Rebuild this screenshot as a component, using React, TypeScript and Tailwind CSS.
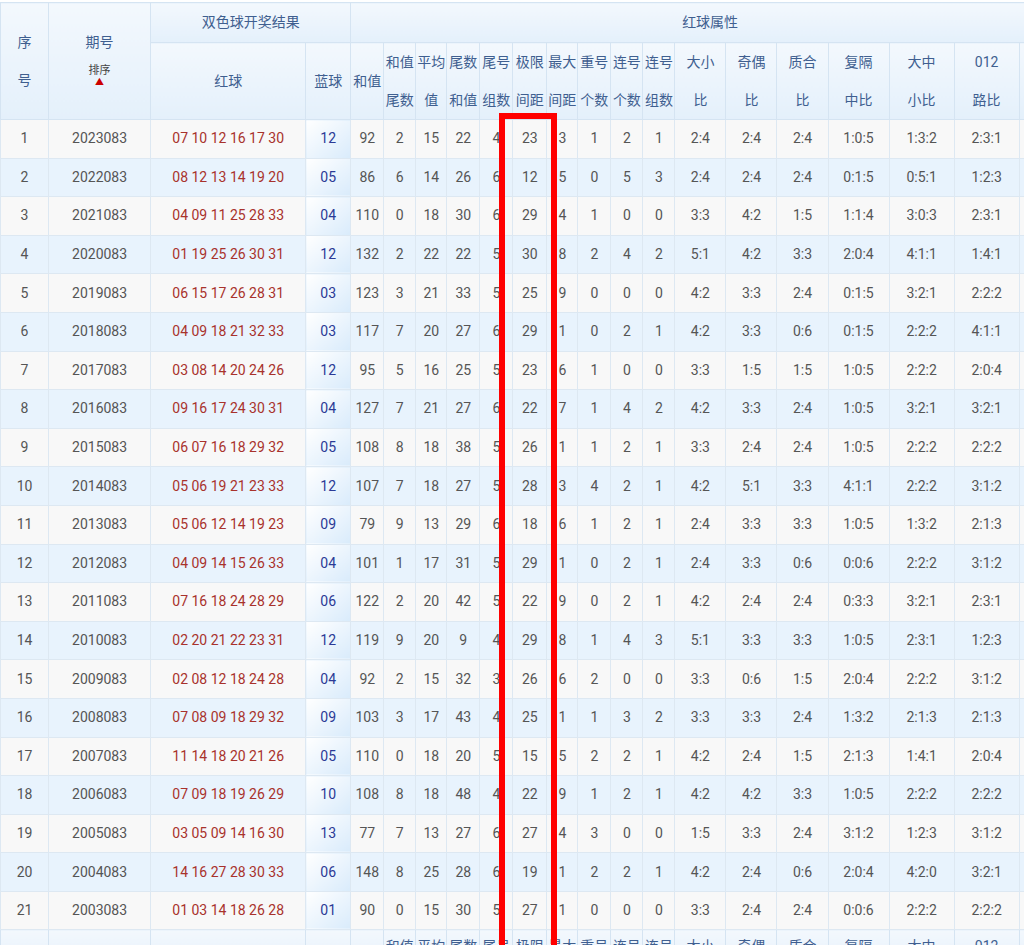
import React from "react";

const raw = `1 2023083 07 10 12 16 17 30|12|92 2 15 22 4 23 3 1 2 1 2:4 2:4 2:4 1:0:5 1:3:2 2:3:1
2 2022083 08 12 13 14 19 20|05|86 6 14 26 6 12 5 0 5 3 2:4 2:4 2:4 0:1:5 0:5:1 1:2:3
3 2021083 04 09 11 25 28 33|04|110 0 18 30 6 29 4 1 0 0 3:3 4:2 1:5 1:1:4 3:0:3 2:3:1
4 2020083 01 19 25 26 30 31|12|132 2 22 22 5 30 8 2 4 2 5:1 4:2 3:3 2:0:4 4:1:1 1:4:1
5 2019083 06 15 17 26 28 31|03|123 3 21 33 5 25 9 0 0 0 4:2 3:3 2:4 0:1:5 3:2:1 2:2:2
6 2018083 04 09 18 21 32 33|03|117 7 20 27 6 29 1 0 2 1 4:2 3:3 0:6 0:1:5 2:2:2 4:1:1
7 2017083 03 08 14 20 24 26|12|95 5 16 25 5 23 6 1 0 0 3:3 1:5 1:5 1:0:5 2:2:2 2:0:4
8 2016083 09 16 17 24 30 31|04|127 7 21 27 6 22 7 1 4 2 4:2 3:3 2:4 1:0:5 3:2:1 3:2:1
9 2015083 06 07 16 18 29 32|05|108 8 18 38 5 26 1 1 2 1 3:3 2:4 2:4 1:0:5 2:2:2 2:2:2
10 2014083 05 06 19 21 23 33|12|107 7 18 27 5 28 3 4 2 1 4:2 5:1 3:3 4:1:1 2:2:2 3:1:2
11 2013083 05 06 12 14 19 23|09|79 9 13 29 6 18 6 1 2 1 2:4 3:3 3:3 1:0:5 1:3:2 2:1:3
12 2012083 04 09 14 15 26 33|04|101 1 17 31 5 29 1 0 2 1 2:4 3:3 0:6 0:0:6 2:2:2 3:1:2
13 2011083 07 16 18 24 28 29|06|122 2 20 42 5 22 9 0 2 1 4:2 2:4 2:4 0:3:3 3:2:1 2:3:1
14 2010083 02 20 21 22 23 31|12|119 9 20 9 4 29 8 1 4 3 5:1 3:3 3:3 1:0:5 2:3:1 1:2:3
15 2009083 02 08 12 18 24 28|04|92 2 15 32 3 26 6 2 0 0 3:3 0:6 1:5 2:0:4 2:2:2 3:1:2
16 2008083 07 08 09 18 29 32|09|103 3 17 43 4 25 1 1 3 2 3:3 3:3 2:4 1:3:2 2:1:3 2:1:3
17 2007083 11 14 18 20 21 26|05|110 0 18 20 5 15 5 2 2 1 4:2 2:4 1:5 2:1:3 1:4:1 2:0:4
18 2006083 07 09 18 19 26 29|10|108 8 18 48 4 22 9 1 2 1 4:2 4:2 3:3 1:0:5 2:2:2 2:2:2
19 2005083 03 05 09 14 16 30|13|77 7 13 27 6 27 4 3 0 0 1:5 3:3 2:4 3:1:2 1:2:3 3:1:2
20 2004083 14 16 27 28 30 33|06|148 8 25 28 6 19 1 2 2 1 4:2 2:4 0:6 2:0:4 4:2:0 3:2:1
21 2003083 01 03 14 18 26 28|01|90 0 15 30 5 27 1 0 0 0 3:3 2:4 2:4 0:0:6 2:2:2 2:2:2`;

const rows = raw.split("\n").map((l) => {
  const [a, b, c] = l.split("|");
  const p = a.split(" ");
  return { n: p[0], q: p[1], red: p.slice(2).join(" "), blue: b, rest: c.split(" ") };
});

const widths = [48, 102, 155, 45, 33, 32, 31, 33, 33, 34, 31, 33, 32, 32, 51, 51, 51, 61, 65, 65, 50];
const attrs: [string, string][] = [
  ["和值", "尾数"], ["平均", "值"], ["尾数", "和值"], ["尾号", "组数"], ["极限", "间距"], ["最大", "间距"],
  ["重号", "个数"], ["连号", "个数"], ["连号", "组数"], ["大小", "比"], ["奇偶", "比"], ["质合", "比"],
  ["复隔", "中比"], ["大中", "小比"], ["012", "路比"], ["", ""],
];

const th = "border border-[#d5e4f2] bg-gradient-to-b from-[#f3f8fd] to-[#e4f0fb] text-[#3f5f90] font-normal text-[14px] p-0 text-center";

export default function App() {
  return (
    <div className="relative w-[1024px] h-[945px] overflow-hidden bg-white" style={{ fontFamily: "Roboto, 'Noto Sans CJK SC', sans-serif" }}>
      <table className="border-collapse table-fixed w-[1070px] mt-[2px]">
        <colgroup>
          {widths.map((w, i) => (
            <col key={i} style={{ width: w }} />
          ))}
        </colgroup>
        <thead>
          <tr className="h-[40px]">
            <th rowSpan={2} className={th}>
              <div className="leading-[38px]">序<br />号</div>
            </th>
            <th rowSpan={2} className={th}>
              <div className="leading-[24px] -mt-[6px]">期号</div>
              <div className="text-[11px] text-[#444] leading-[14px] mt-[10px]">排序</div>
              <div className="text-[#c00] text-[9px] leading-[8px]">▲</div>
            </th>
            <th colSpan={2} className={th}>双色球开奖结果</th>
            <th colSpan={17} className={th}>红球属性</th>
          </tr>
          <tr className="h-[76px]">
            <th className={th}>红球</th>
            <th className={th}>蓝球</th>
            <th className={th}>和值</th>
            {attrs.map(([a, b], i) => (
              <th key={i} className={th}>
                <div className="leading-[38px] whitespace-nowrap">{a}<br />{b}</div>
              </th>
            ))}
          </tr>
        </thead>
        <tbody>
          {rows.map((r, i) => {
            const bg = i % 2 === 0 ? "bg-[#f8f8f8]" : "bg-[#e8f3fd]";
            const td = "border border-[#dde8f2] text-center p-0 text-[14px] whitespace-nowrap";
            return (
              <tr key={i} className={`h-[38.6px] ${bg} text-[#555]`}>
                <td className={td}>{r.n}</td>
                <td className={td}>{r.q}</td>
                <td className={`${td} text-[#a8322c]`}>{r.red}</td>
                <td className={`${td} text-[#2b3a96] bg-gradient-to-br from-[#ffffff] to-[#d9ebfb]`}>{r.blue}</td>
                {r.rest.map((v, j) => (
                  <td key={j} className={td}>{v}</td>
                ))}
                <td className={td}></td>
              </tr>
            );
          })}
          <tr className="h-[40px]">
            <td className={`${th} bg-[#e4f0fb]`}></td>
            <td className={`${th} bg-[#e4f0fb]`}></td>
            <td className={`${th} bg-[#e4f0fb]`}></td>
            <td className={`${th} bg-[#e4f0fb]`}></td>
            <td className={`${th} bg-[#e4f0fb]`}></td>
            {attrs.map(([a], i) => (
              <td key={i} className={`${th} align-top pt-[6px]`}>{a}</td>
            ))}
          </tr>
        </tbody>
      </table>
      <div className="absolute left-[499px] top-[113px] w-[58px] h-[900px] border-[6px] border-[#f00]" />
    </div>
  );
}
